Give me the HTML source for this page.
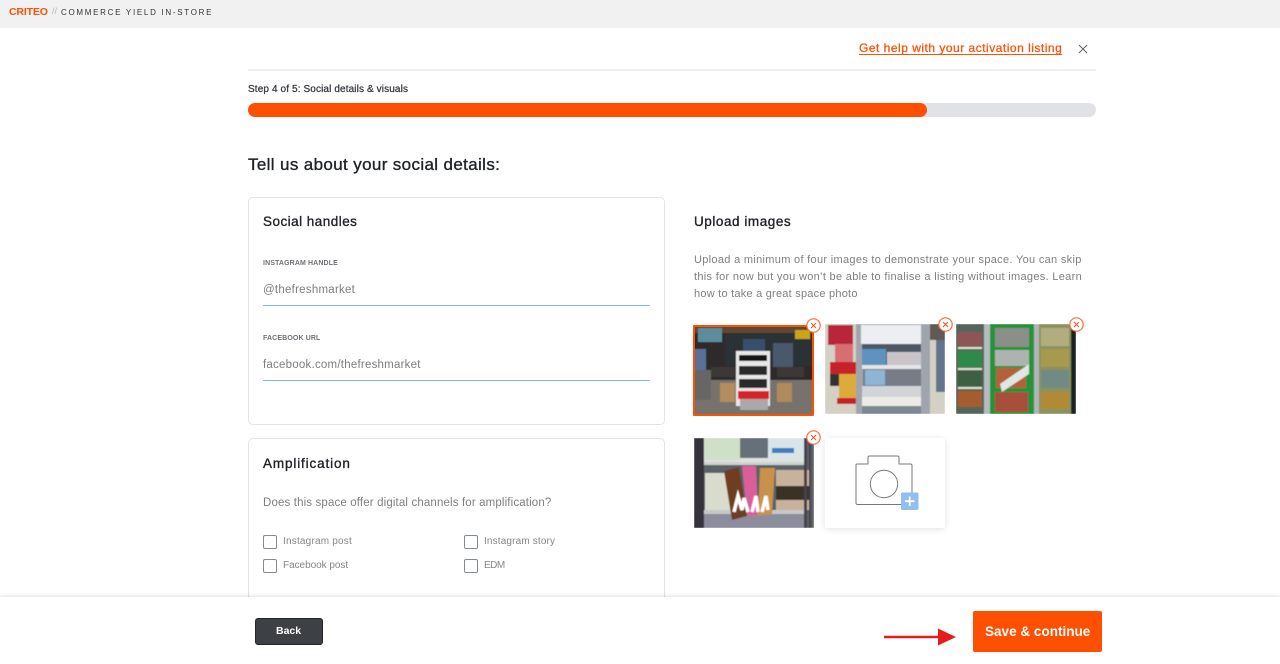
<!DOCTYPE html>
<html lang="en"><head><meta charset="utf-8"><title>Social details</title>
<style>
*{box-sizing:border-box}
html,body{margin:0;padding:0;width:1280px;height:664px;overflow:hidden;background:#fff;font-family:"Liberation Sans",sans-serif}
.t{position:absolute;white-space:nowrap;line-height:1}
.hd{font-weight:400;color:#1f2227;-webkit-text-stroke:.35px #1f2227}
.card{position:absolute;left:248px;width:417px;background:#fff;border:1px solid #e2e3e5;border-radius:5px}
.line{position:absolute;left:263px;width:387px;height:1px;background:#7fb3ee}
.cb{position:absolute;width:14px;height:14px;border:1.3px solid #858a92;border-radius:2px;background:#fff}
.lbl{font-size:7px;color:#55585e;letter-spacing:.12px;font-weight:700;opacity:.85}
.val{font-size:11.5px;color:#7d7d7d}
.opt{font-size:10px;color:#85868a}
.p{font-size:11px;color:#7f7f7f;letter-spacing:.31px}
.thumb{position:absolute;display:block;overflow:hidden}
.x{position:absolute;width:15px;height:15px}
</style></head><body>
<svg width="0" height="0" style="position:absolute"><filter id="b"><feGaussianBlur stdDeviation=".6"/></filter></svg>
<div style="position:absolute;left:0;top:0;width:1280px;height:28px;background:#f1f1f1"></div>
<div class="t" style="left:9px;top:7px;font-size:10.500px;font-weight:700;color:#ff4f00;letter-spacing:-.15px">CRITEO</div>
<div class="t" style="left:52px;top:7px;font-size:9px;color:#b5b5b5">//</div>
<div class="t" style="left:61px;top:8.500px;font-size:8px;color:#333;letter-spacing:1.7px">COMMERCE YIELD IN-STORE</div>

<a class="t" style="left:859px;top:42px;font-size:12px;color:#ff4f00;letter-spacing:.5px;text-decoration:underline;text-underline-offset:2px;-webkit-text-stroke:.25px #ff4f00">Get help with your activation listing</a>
<svg style="position:absolute;left:1078px;top:44px" width="10" height="10" viewBox="0 0 10 10"><path d="M1 1L9 9M9 1L1 9" stroke="#5f6368" stroke-width="1"/></svg>
<div style="position:absolute;left:248px;top:69px;width:848px;height:2px;background:#f0f0f1"></div>

<div class="t" style="left:248px;top:85px;font-size:10px;color:#33363b;letter-spacing:.12px;-webkit-text-stroke:.25px #33363b">Step 4 of 5: Social details &amp; visuals</div>
<div style="position:absolute;left:248px;top:103px;width:848px;height:14px;border-radius:7px;background:#e1e2e6"></div>
<div style="position:absolute;left:248px;top:103px;width:679px;height:14px;border-radius:7px;background:#ff4f00"></div>

<div class="t hd" style="left:248px;top:156px;font-size:17px;letter-spacing:.36px">Tell us about your social details:</div>

<div class="card" style="top:197px;height:228px"></div>
<div class="t hd" style="left:263px;top:215px;font-size:13.500px;letter-spacing:.47px">Social handles</div>
<div class="t lbl" style="left:263px;top:260px">INSTAGRAM HANDLE</div>
<div class="t val" style="left:263px;top:285px;letter-spacing:.25px">@thefreshmarket</div>
<div class="line" style="top:305px"></div>
<div class="t lbl" style="left:263px;top:335px">FACEBOOK URL</div>
<div class="t val" style="left:263px;top:360px;letter-spacing:.23px">facebook.com/thefreshmarket</div>
<div class="line" style="top:380px"></div>

<div class="card" style="top:438px;height:190px"></div>
<div class="t hd" style="left:263px;top:457px;font-size:13.500px;letter-spacing:.86px">Amplification</div>
<div class="t p" style="left:263px;top:497.500px;font-size:11.500px;letter-spacing:.14px">Does this space offer digital channels for amplification?</div>
<div class="cb" style="left:263px;top:535px"></div><div class="t opt" style="left:283px;top:537px;letter-spacing:.2px">Instagram post</div>
<div class="cb" style="left:464px;top:535px"></div><div class="t opt" style="left:484px;top:537px;letter-spacing:.15px">Instagram story</div>
<div class="cb" style="left:263px;top:559px"></div><div class="t opt" style="left:283px;top:561px;letter-spacing:-.04px">Facebook post</div>
<div class="cb" style="left:464px;top:559px"></div><div class="t opt" style="left:484px;top:561px;letter-spacing:-.5px">EDM</div>

<div class="t hd" style="left:694px;top:214.500px;font-size:13.500px;letter-spacing:.55px">Upload images</div>
<div class="t p" style="left:694px;top:255px">Upload a minimum of four images to demonstrate your space. You can skip</div>
<div class="t p" style="left:694px;top:272px">this for now but you won’t be able to finalise a listing without images. Learn</div>
<div class="t p" style="left:694px;top:289px;letter-spacing:.23px">how to take a great space photo</div>

<svg class="thumb" style="left:693px;top:325px" width="121" height="91" viewBox="0 0 121 91">
<g filter="url(#b)">
<rect width="121" height="91" fill="#2d2b2c"/>
<rect x="0" y="0" width="121" height="8" fill="#5c4a34"/>
<rect x="5" y="3" width="24" height="14" fill="#5d8d9c"/>
<rect x="32" y="9" width="88" height="32" fill="#2c3036"/>
<rect x="50" y="14" width="22" height="16" fill="#39506c"/>
<rect x="80" y="18" width="20" height="24" fill="#4a586a"/>
<rect x="102" y="5" width="15" height="9" fill="#c9a51e"/>
<rect x="1" y="24" width="12" height="30" fill="#5a6f96"/>
<rect x="0" y="55" width="121" height="36" fill="#77736c"/>
<rect x="18" y="42" width="24" height="10" fill="#3a3735"/>
<rect x="84" y="42" width="27" height="10" fill="#3a3735"/>
<rect x="0" y="45" width="18" height="30" fill="#666"/>
<rect x="27" y="58" width="15" height="19" fill="#b38d5d"/>
<rect x="84" y="58" width="15" height="19" fill="#ae8a5c"/>
<rect x="43" y="26" width="34" height="55" fill="#e8e8e8"/>
<rect x="46" y="30" width="28" height="6" fill="#191919"/>
<rect x="46" y="41" width="28" height="9" fill="#2a2a2a"/>
<rect x="46" y="54" width="28" height="9" fill="#2a2a2a"/>
<rect x="45" y="66" width="31" height="8" fill="#d8202b"/>
<rect x="47" y="74" width="28" height="11" fill="#a9a9a9"/>
</g>
<rect x="1" y="1" width="119" height="89" fill="none" stroke="#ff4f00" stroke-width="2" rx="1"/>
</svg>
<svg class="x" style="left:806px;top:318px" viewBox="0 0 15 15"><circle cx="7.5" cy="7.5" r="6.7" fill="#fff" stroke="#ff6a33" stroke-width="1.2"/><path d="M5 5L10 10M10 5L5 10" stroke="#e8502a" stroke-width="1"/></svg>

<svg class="thumb" style="left:825px;top:324px" width="120" height="90" viewBox="0 0 120 90">
<g filter="url(#b)">
<rect width="120" height="90" fill="#d4d1c4"/>
<rect x="3" y="1" width="25" height="20" fill="#b9283a"/>
<rect x="10" y="20" width="18" height="22" fill="#d86e72"/>
<rect x="5" y="38" width="26" height="13" fill="#c7232c"/>
<rect x="14" y="50" width="18" height="28" fill="#dcab3a"/>
<rect x="12" y="74" width="20" height="6" fill="#c4222b"/>
<rect x="5" y="50" width="9" height="12" fill="#333"/>
<rect x="31" y="0" width="74" height="90" fill="#a0a5ad"/>
<rect x="36" y="1" width="60" height="19" fill="#eceef2"/>
<rect x="37" y="20" width="59" height="22" fill="#4d5866"/>
<rect x="37" y="25" width="24" height="16" fill="#5d93bd"/>
<rect x="62" y="28" width="34" height="13" fill="#c9c4c8"/>
<rect x="37" y="41" width="59" height="4" fill="#e4e5e6"/>
<rect x="38" y="45" width="58" height="17" fill="#767d87"/>
<rect x="40" y="46" width="20" height="15" fill="#8fb5d5"/>
<rect x="37" y="62" width="59" height="11" fill="#d2d4d7"/>
<rect x="37" y="73" width="59" height="9" fill="#ecebe5"/>
<rect x="37" y="82" width="59" height="8" fill="#7f8790"/>
<rect x="105" y="0" width="15" height="16" fill="#5f5a52"/>
<rect x="111" y="16" width="9" height="52" fill="#64748a"/>
</g></svg>
<svg class="x" style="left:937.5px;top:316.5px" viewBox="0 0 15 15"><circle cx="7.5" cy="7.5" r="6.7" fill="#fff" stroke="#ff6a33" stroke-width="1.2"/><path d="M5 5L10 10M10 5L5 10" stroke="#e8502a" stroke-width="1"/></svg>

<svg class="thumb" style="left:956px;top:324px" width="120" height="90" viewBox="0 0 120 90">
<g filter="url(#b)">
<rect width="120" height="90" fill="#3d4a44"/>
<rect x="0" y="0" width="28" height="90" fill="#56655a"/>
<rect x="2" y="8" width="24" height="14" fill="#8d5555"/>
<rect x="2" y="23" width="24" height="2" fill="#dfe3cf"/>
<rect x="2" y="27" width="24" height="16" fill="#2f8a4a"/>
<rect x="2" y="44" width="24" height="2" fill="#dfe3cf"/>
<rect x="2" y="47" width="24" height="15" fill="#3e5e42"/>
<rect x="2" y="63" width="24" height="2" fill="#dfe3cf"/>
<rect x="2" y="67" width="24" height="16" fill="#a55b2e"/>
<rect x="28" y="0" width="6" height="90" fill="#b5bcc0"/>
<rect x="34" y="0" width="44" height="90" fill="#26933a"/>
<rect x="39" y="4" width="34" height="19" fill="#8a9088"/>
<rect x="39" y="26" width="34" height="16" fill="#aeb3b0"/>
<rect x="40" y="44" width="30" height="20" fill="#b4603a"/>
<rect x="39" y="68" width="33" height="20" fill="#a8503a"/>
<path d="M44 60L73 40V50L46 68Z" fill="#e0e6e2"/>
<rect x="78" y="0" width="5" height="90" fill="#aeb6b8"/>
<rect x="83" y="0" width="32" height="90" fill="#8c9160"/>
<rect x="85" y="4" width="28" height="18" fill="#b2ad7e"/>
<rect x="85" y="25" width="28" height="18" fill="#a89a4d"/>
<rect x="85" y="46" width="28" height="18" fill="#6f8a84"/>
<rect x="85" y="68" width="28" height="17" fill="#b08a35"/>
<rect x="115" y="0" width="5" height="90" fill="#1e2020"/>
</g></svg>
<svg class="x" style="left:1069px;top:316.5px" viewBox="0 0 15 15"><circle cx="7.5" cy="7.5" r="6.7" fill="#fff" stroke="#ff6a33" stroke-width="1.2"/><path d="M5 5L10 10M10 5L5 10" stroke="#e8502a" stroke-width="1"/></svg>

<svg class="thumb" style="left:693.5px;top:438px" width="120" height="90" viewBox="0 0 120 90">
<g filter="url(#b)">
<rect width="120" height="90" fill="#5c6468"/>
<rect x="0" y="0" width="10" height="90" fill="#34323a"/>
<rect x="10" y="0" width="100" height="25" fill="#dfe3dd"/>
<rect x="11" y="0" width="35" height="22" fill="#cfe0c8"/>
<rect x="46" y="0" width="28" height="20" fill="#667078"/>
<rect x="74" y="0" width="36" height="20" fill="#d9e4e9"/>
<rect x="78" y="10" width="22" height="5" fill="#3a7fc4"/>
<rect x="10" y="24" width="100" height="3" fill="#cfd3cf"/>
<rect x="11" y="35" width="25" height="40" fill="#d9dccd"/>
<rect x="10" y="72" width="100" height="4" fill="#c6c9c6"/>
<rect x="10" y="76" width="100" height="14" fill="#8b8c9c"/>
<path d="M30 33L45 29L53 78L38 82Z" fill="#6e3d24"/>
<path d="M48 28H62L64 78H53Z" fill="#d95f9a"/>
<path d="M66 30H81L78 76L64 78Z" fill="#c8924a"/>
<path d="M40 74L44 58L48 72L50 60L54 74M58 74L62 58L64 74M68 74L72 58L74 72" stroke="#fff" stroke-width="3.500" fill="none"/>
<rect x="82" y="32" width="34" height="40" fill="#c7b39c"/>
<rect x="82" y="48" width="34" height="14" fill="#3a3128"/>
<rect x="110" y="0" width="3" height="90" fill="#463f4c"/>
<rect x="115" y="0" width="2" height="90" fill="#463f4c"/>
</g></svg>
<svg class="x" style="left:806px;top:430px" viewBox="0 0 15 15"><circle cx="7.5" cy="7.5" r="6.7" fill="#fff" stroke="#ff6a33" stroke-width="1.2"/><path d="M5 5L10 10M10 5L5 10" stroke="#e8502a" stroke-width="1"/></svg>

<div style="position:absolute;left:825px;top:438px;width:120px;height:90px;background:#fff;border-radius:2px;box-shadow:0 1px 7px rgba(0,0,0,.12)"></div>
<svg style="position:absolute;left:850px;top:450px" width="72" height="64" viewBox="0 0 72 64">
<path d="M7 14H18V7.500a1.500 1.500 0 0 1 1.500-1.500H47.500a1.500 1.500 0 0 1 1.500 1.500V14H60.500a1.500 1.500 0 0 1 1.500 1.500V54.500H7.500a1.500 1.500 0 0 1-1.500-1.500V15a1 1 0 0 1 1-1Z" fill="none" stroke="#77797d" stroke-width="1"/>
<circle cx="34" cy="34" r="13.700" fill="none" stroke="#77797d" stroke-width="1"/>
<rect x="51" y="42.500" width="17.500" height="17.500" rx="1.500" fill="#93bff0"/>
<path d="M59.700 46.500V56M55 51.200H64.500" stroke="#fff" stroke-width="1.800"/>
</svg>

<div style="position:absolute;left:0;top:597px;width:1280px;height:67px;background:#fff;box-shadow:0 -1px 4px rgba(0,0,0,.12)"></div>
<div style="position:absolute;left:255px;top:618px;width:68px;height:27px;background:#3d4045;border:1px solid #24262a;border-radius:3px"></div>
<div class="t" style="left:276px;top:626px;font-size:10.500px;font-weight:700;color:#fff">Back</div>
<div style="position:absolute;left:973px;top:611px;width:129px;height:41px;background:#ff4f00;border-radius:2px"></div>
<div class="t" style="left:985px;top:625px;font-size:13.500px;font-weight:700;color:#fff;letter-spacing:.02px">Save &amp; continue</div>
<svg style="position:absolute;left:884px;top:627px" width="74" height="22" viewBox="0 0 74 22"><path d="M0 10H56" stroke="#e41c1c" stroke-width="2.600"/><path d="M54 1.500L72 10L54 18.500Z" fill="#e41c1c"/></svg>
</body></html>
